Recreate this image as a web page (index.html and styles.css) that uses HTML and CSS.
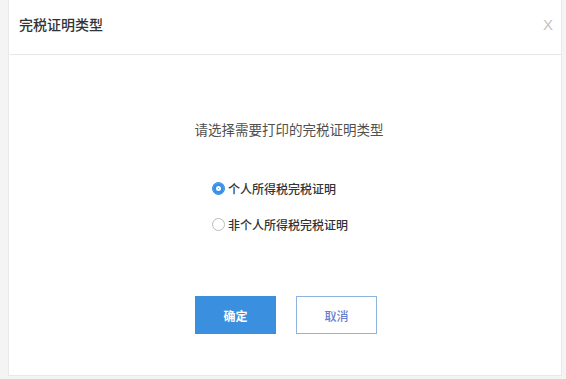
FILE: index.html
```html
<!DOCTYPE html>
<html>
<head>
    <title>完税证明类型</title>
    <link rel="stylesheet" href="styles.css">
</head>
<body>
    <div class="dialog">
        <div class="dialog-header">
            <span class="dialog-title">完税证明类型</span>
            <span class="dialog-close">X</span>
        </div>
        <div class="dialog-body">
            <p class="prompt">请选择需要打印的完税证明类型</p>
            <div class="radio-group">
                <label class="radio-row">
                    <span class="radio checked"></span>
                    <span>个人所得税完税证明</span>
                </label>
                <label class="radio-row">
                    <span class="radio"></span>
                    <span>非个人所得税完税证明</span>
                </label>
            </div>
            <div class="actions">
                <button class="btn btn-primary">确定</button>
                <button class="btn btn-default">取消</button>
            </div>
        </div>
    </div>
</body>
</html>
```

FILE: styles.css
```css
body {
    margin: 0;
    background: #f4f4f4;
    font-family: "Noto Sans CJK SC", "Liberation Sans", sans-serif;
    color: #333;
}
.dialog {
    margin-left: 8px;
    width: 552px;
    height: 375px;
    background: #fff;
    border: 1px solid #e9e9e9;
    border-top: none;
}
.dialog-header {
    height: 54px;
    display: flex;
    align-items: center;
    justify-content: space-between;
    padding: 0 8px 0 9px;
    border-bottom: 1px solid #e6e6e6;
    margin-left: 1px;
}
.dialog-title {
    font-size: 14px;
    font-weight: 500;
    color: #333;
    margin-top: -6px;
}
.dialog-close {
    font-family: "Liberation Sans", sans-serif;
    font-size: 15px;
    color: #c4c4c4;
    margin-top: -6px;
}
.dialog-body {
    padding-top: 64px;
}
.prompt {
    margin: 0 0 37px;
    text-align: center;
    font-size: 13.5px;
    line-height: 20px;
    color: #505050;
    padding-left: 8px;
}
.radio-group {
    display: flex;
    flex-direction: column;
    gap: 12px;
    padding-left: 203px;
}
.radio-row {
    display: flex;
    align-items: center;
    gap: 3px;
    height: 24px;
    font-size: 12px;
    font-weight: 500;
    color: #333;
}
.radio {
    width: 11px;
    height: 11px;
    border-radius: 50%;
    border: 1px solid #bbb;
    background: #fff;
}
.radio.checked {
    border-color: #3a8ee6;
    background: #3a8ee6;
    box-shadow: inset 0 0 0 3px #3a8ee6, inset 0 0 0 5px #fff;
}
.actions {
    display: flex;
    justify-content: center;
    gap: 20px;
    margin-top: 60px;
    padding-left: 2px;
}
.btn {
    width: 81px;
    height: 38px;
    font-family: "Noto Sans CJK SC", sans-serif;
    font-size: 12px;
    font-weight: 700;
    cursor: pointer;
}
.btn-primary {
    background: #3a8fde;
    border: 1px solid #3a8fde;
    color: #fff;
}
.btn-default {
    background: #fff;
    border: 1px solid #8db3df;
    color: #6a7fcc;
    font-weight: 500;
}
```
